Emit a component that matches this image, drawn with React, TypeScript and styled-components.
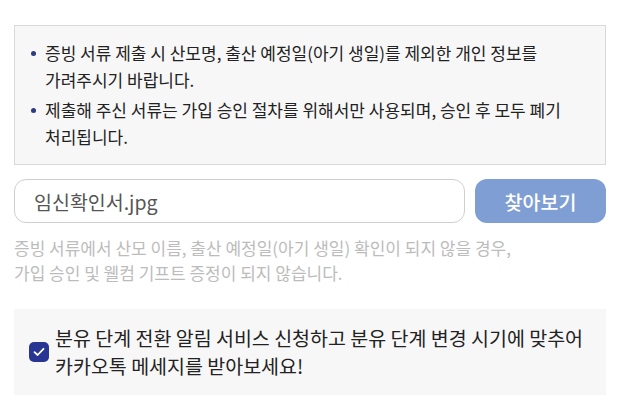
import styled, { createGlobalStyle } from 'styled-components'

const GlobalStyle = createGlobalStyle`
    body {
        margin: 0;
        background: #fff;
        font-family: 'Noto Sans CJK KR', 'Noto Sans', sans-serif;
        color: #222;
    }
`

const Page = styled.div`
    width: 592px;
    padding: 25px 28px 0 14px;
`

const InfoBox = styled.ul`
    margin: 0;
    padding: 13px 12px 14px 12px;
    list-style: none;
    background: #f7f7f7;
    border: 1px solid #d9d9d9;
    display: flex;
    flex-direction: column;
    gap: 3px;
`

const InfoItem = styled.li`
    position: relative;
    padding-left: 18px;
    font-size: 17px;
    line-height: 27px;
    color: #222;
    &::before {
        content: '';
        position: absolute;
        left: 4px;
        top: 12px;
        width: 5px;
        height: 5px;
        border-radius: 50%;
        background: #2d3a84;
    }
`

const FileRow = styled.div`
    display: flex;
    gap: 10px;
    margin-top: 14px;
    height: 44px;
`

const FileInput = styled.div`
    flex: 1;
    display: flex;
    align-items: center;
    padding: 0 19px;
    border: 1px solid #cfcfcf;
    border-radius: 12px;
    font-size: 19.5px;
    color: #555;
`

const FindButton = styled.button`
    width: 131px;
    border: none;
    border-radius: 12px;
    background: #7f9fd4;
    color: #fff;
    font-family: inherit;
    font-size: 19.5px;
    font-weight: 500;
`

const Notice = styled.p`
    margin: 12px 0 0;
    font-size: 17px;
    line-height: 25px;
    color: #bcbcbc;
`

const AlarmPanel = styled.label`
    display: flex;
    align-items: center;
    gap: 6px;
    margin-top: 24px;
    padding: 15px 12px 15px 15px;
    background: #f7f7f7;
`

const CheckBox = styled.span`
    flex: none;
    width: 20px;
    height: 20px;
    border-radius: 5px;
    background: #283593;
    display: flex;
    align-items: center;
    justify-content: center;
`

const AlarmText = styled.span`
    font-size: 19.5px;
    line-height: 28px;
    color: #222;
    white-space: nowrap;
`

export default function App() {
    return (
        <>
            <GlobalStyle />
            <Page>
                <InfoBox>
                    <InfoItem>
                        증빙 서류 제출 시 산모명, 출산 예정일(아기 생일)를 제외한 개인 정보를
                        <br />
                        가려주시기 바랍니다.
                    </InfoItem>
                    <InfoItem>
                        제출해 주신 서류는 가입 승인 절차를 위해서만 사용되며, 승인 후 모두 폐기
                        <br />
                        처리됩니다.
                    </InfoItem>
                </InfoBox>

                <FileRow>
                    <FileInput>임신확인서.jpg</FileInput>
                    <FindButton>찾아보기</FindButton>
                </FileRow>

                <Notice>
                    증빙 서류에서 산모 이름, 출산 예정일(아기 생일) 확인이 되지 않을 경우,
                    <br />
                    가입 승인 및 웰컴 기프트 증정이 되지 않습니다.
                </Notice>

                <AlarmPanel>
                    <CheckBox>
                        <svg width='12' height='10' viewBox='0 0 12 10'>
                            <path d='M1.5 5.2 L4.6 8 L10.5 1.8' fill='none' stroke='#fff' strokeWidth='1.8' strokeLinecap='round' strokeLinejoin='round' />
                        </svg>
                    </CheckBox>
                    <AlarmText>
                        분유 단계 전환 알림 서비스 신청하고 분유 단계 변경 시기에 맞추어
                        <br />
                        카카오톡 메세지를 받아보세요!
                    </AlarmText>
                </AlarmPanel>
            </Page>
        </>
    )
}
